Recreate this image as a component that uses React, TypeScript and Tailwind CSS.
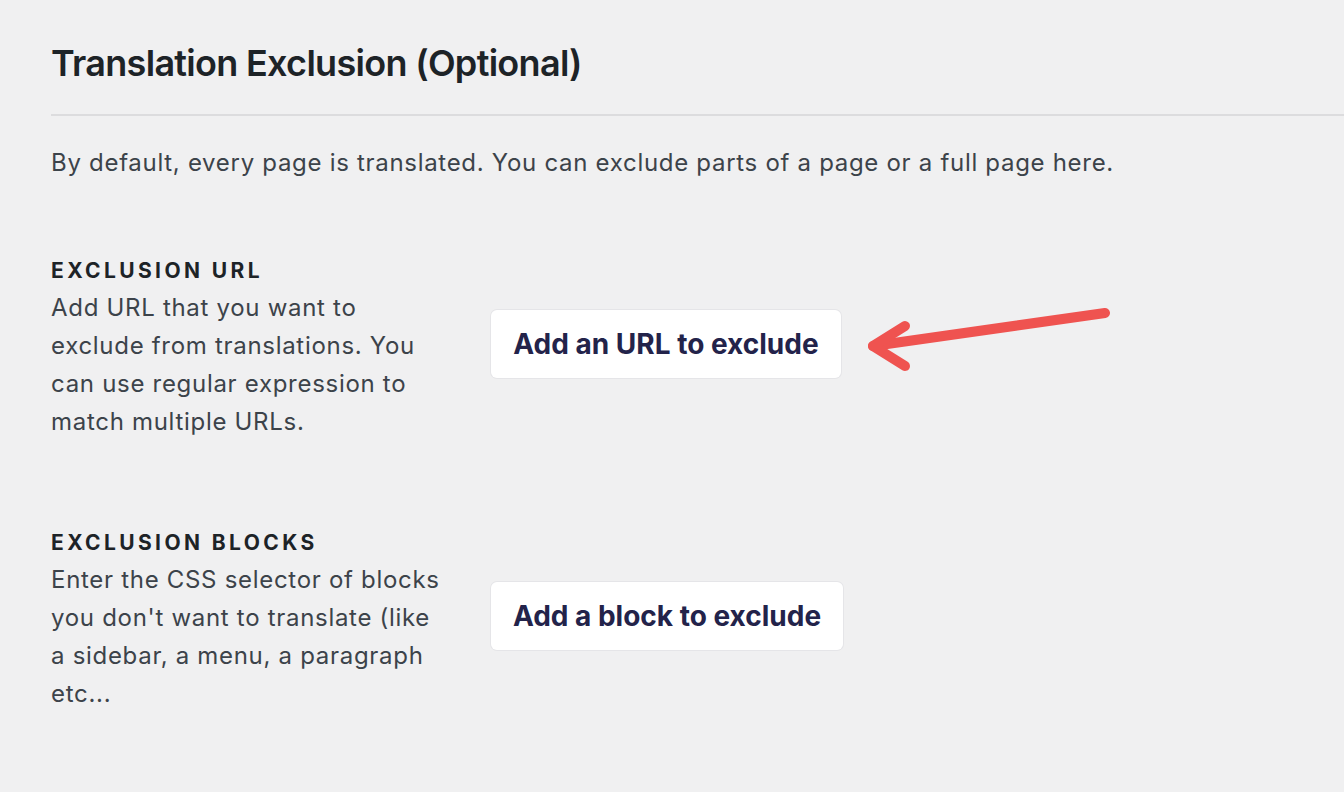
export default function App() {
  return (
    <div className="min-h-[792px] w-[1344px] overflow-hidden bg-[#f0f0f1] font-['Inter',sans-serif] text-[#1d2327]">
      <div className="pl-[51px] pt-[41px]">
        <h1 className="text-[36px] font-semibold leading-[44px] tracking-[-0.7px] text-[#1d2327]">Translation Exclusion (Optional)</h1>
      </div>
      <div className="ml-[51px] mt-[29px] h-[2px] bg-[#dcdcde]" />
      <p className="ml-[51px] mt-[30px] text-[24px] leading-[34px] tracking-[0.7px] text-[#3c434a]">
        By default, every page is translated. You can exclude parts of a page or a full page here.
      </p>
      <div className="ml-[51px] mt-[77px] flex flex-col gap-[88px]">
        <div className="flex items-start">
          <div className="w-[440px]">
            <div className="text-[21px] font-bold uppercase leading-[28px] tracking-[3.4px] text-[#1d2327]">Exclusion URL</div>
            <p className="mt-[4px] w-[392px] text-[24px] leading-[38px] tracking-[0.7px] text-[#3c434a]">
              Add URL that you want to exclude from translations. You can use regular expression to match multiple URLs.
            </p>
          </div>
          <div className="relative mt-[53px]">
            <button className="h-[68px] w-[350px] rounded-[6px] bg-white text-[28px] font-bold text-[#23234a] shadow-[0_0_0_1px_#e5e5e8]">
              Add an URL to exclude
            </button>
            <svg className="absolute left-[370px] top-[-4px]" width="250" height="70" viewBox="0 0 250 70">
              <g fill="none" stroke="#ef5350" strokeWidth="10" strokeLinecap="round" strokeLinejoin="round">
                <path d="M244 7 L12 40" />
                <path d="M44 20 L12 40 L44 60" />
              </g>
            </svg>
          </div>
        </div>
        <div className="flex items-start">
          <div className="w-[440px]">
            <div className="text-[21px] font-bold uppercase leading-[28px] tracking-[3.4px] text-[#1d2327]">Exclusion Blocks</div>
            <p className="mt-[4px] w-[392px] text-[24px] leading-[38px] tracking-[0.7px] text-[#3c434a]">
              Enter the CSS selector of blocks you don't want to translate (like a sidebar, a menu, a paragraph etc...
            </p>
          </div>
          <div className="mt-[53px]">
            <button className="h-[68px] w-[352px] rounded-[6px] bg-white text-[28px] font-bold text-[#23234a] shadow-[0_0_0_1px_#e5e5e8]">
              Add a block to exclude
            </button>
          </div>
        </div>
      </div>
    </div>
  );
}
